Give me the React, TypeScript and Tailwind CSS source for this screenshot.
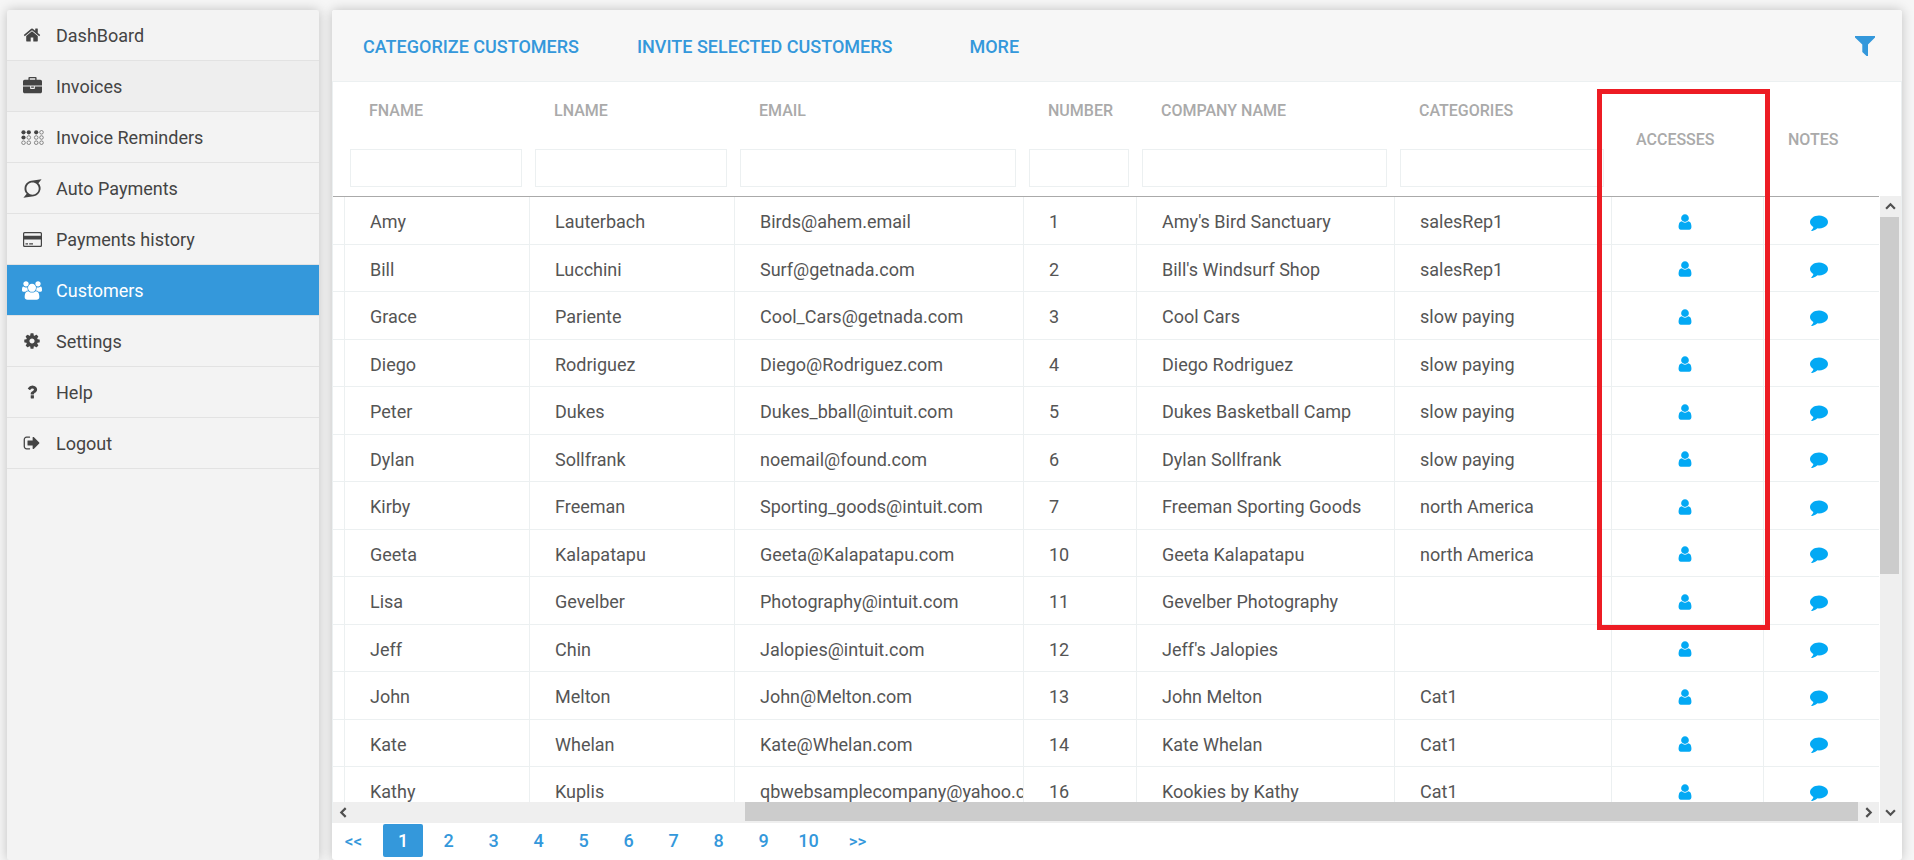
import React from "react";

const P = {
  home: "M1472 992v480q0 26-19 45t-45 19h-384v-384h-256v384h-384q-26 0-45-19t-19-45v-480q0-1 .5-3t.5-3l575-474 575 474q1 2 1 6zm223-69l-62 74q-8 9-21 11h-3q-13 0-21-7l-692-577-692 577q-12 8-24 7-13-2-21-11l-62-74q-8-10-7-23.5t11-21.5l719-599q32-26 76-26t76 26l244 204v-195q0-14 9-23t23-9h192q14 0 23 9t9 23v408l219 182q10 8 11 21.5t-7 23.5z",
  briefcase: "M640 256h512v-128h-512v128zm1152 640v480q0 66-47 113t-113 47h-1472q-66 0-113-47t-47-113v-480h672v160q0 26 19 45t45 19h320q26 0 45-19t19-45v-160h672zm-768 0v128h-256v-128h256zm768-480v384h-1792v-384q0-66 47-113t113-47h352v-160q0-40 28-68t68-28h576q40 0 68 28t28 68v160h352q66 0 113 47t47 113z",
  cog: "M1152 896q0-106-75-181t-181-75-181 75-75 181 75 181 181 75 181-75 75-181zm512-109v222q0 12-8 23t-20 13l-185 28q-19 54-39 91 35 50 107 138 10 12 10 25t-9 23q-27 37-99 108t-94 71q-12 0-26-9l-138-108q-44 23-91 38-16 136-29 186-7 28-36 28h-222q-14 0-24.5-8.5t-11.5-21.5l-28-184q-49-16-90-37l-141 107q-10 9-25 9-14 0-25-11-126-114-165-168-7-10-7-23 0-12 8-23 15-21 51-66.5t54-70.5q-27-50-41-99l-183-27q-13-2-21-12.5t-8-23.5v-222q0-12 8-23t19-13l186-28q14-46 39-92-40-57-107-138-10-12-10-24 0-10 9-23 26-36 98.5-107.5t94.5-71.5q13 0 26 10l138 107q44-23 91-38 16-136 29-186 7-28 36-28h222q14 0 24.5 8.5t11.5 21.5l28 184q49 16 90 37l142-107q9-9 24-9 13 0 25 10 129 119 165 170 7 8 7 22 0 12-8 23-15 21-51 66.5t-54 70.5q26 50 41 98l183 28q13 2 21 12.5t8 23.5z",
  help: "M1088 1256v240q0 16-12 28t-28 12h-240q-16 0-28-12t-12-28v-240q0-16 12-28t28-12h240q16 0 28 12t12 28zm316-600q0 54-15.5 101t-35 76.5-55 59.5-57.5 43.5-61 35.5q-41 23-68.5 65t-27.5 67q0 17-12 32.5t-28 15.5h-240q-15 0-25.5-18.5t-10.5-37.5v-45q0-83 65-156.5t143-108.5q59-27 84-56t25-76q0-42-46.5-74t-107.5-32q-65 0-108 29-35 25-107 115-13 16-31 16-12 0-25-8l-164-125q-13-10-15.5-25t5.5-28q160-266 464-266 80 0 161 31t146 83 106 127.5 41 158.5z",
  logout: "M704 1440q0 4 1 20t.5 26.5-3 23.5-10 19.5-20.5 6.5h-320q-119 0-203.5-84.5t-84.5-203.5v-704q0-119 84.5-203.5t203.5-84.5h320q13 0 22.5 9.5t9.5 22.5q0 4 1 20t.5 26.5-3 23.5-10 19.5-20.5 6.5h-320q-66 0-113 47t-47 113v704q0 66 47 113t113 47h312l11.5 1 11.5 3 8 5.5 7 9 2 13.5zm928-544q0 26-19 45l-544 544q-19 19-45 19t-45-19-19-45v-288h-448q-26 0-45-19t-19-45v-384q0-26 19-45t45-19h448v-288q0-26 19-45t45-19 45 19l544 544q19 19 19 45z",
  users: "M593 896q-162 5-265 128h-134q-82 0-138-40.5t-56-118.5q0-353 124-353 6 0 43.5 21t97.5 42.5 119 21.5q67 0 133-23-5 37-5 66 0 139 81 256zm1071 637q0 120-73 189.5t-194 69.5h-874q-121 0-194-69.5t-73-189.5q0-53 3.5-103.5t14-109 26.5-108.5 43-97.5 62-81 85.5-53.5 111.5-20q10 0 43 21.5t73 48 107 48 135 21.5 135-21.5 107-48 73-48 43-21.5q61 0 111.5 20t85.5 53.5 62 81 43 97.5 26.5 108.5 14 109 3.5 103.5zm-1024-1277q0 106-75 181t-181 75-181-75-75-181 75-181 181-75 181 75 75 181zm704 384q0 159-112.5 271.5t-271.5 112.5-271.5-112.5-112.5-271.5 112.5-271.5 271.5-112.5 271.5 112.5 112.5 271.5zm576 225q0 78-56 118.5t-138 40.5h-134q-103-123-265-128 81-117 81-256 0-29-5-66 66 23 133 23 59 0 119-21.5t97.5-42.5 43.5-21q124 0 124 353zm-128-609q0 106-75 181t-181 75-181-75-75-181 75-181 181-75 181 75 75 181z",
  user: "M1536 1399q0 109-62.5 187t-150.5 78h-854q-88 0-150.5-78t-62.5-187q0-85 8.5-160.5t31.5-152 58.5-131 94-89 134.5-34.5q131 128 313 128t313-128q76 0 134.5 34.5t94 89 58.5 131 31.5 152 8.5 160.5zm-256-887q0 159-112.5 271.5t-271.5 112.5-271.5-112.5-112.5-271.5 112.5-271.5 271.5-112.5 271.5 112.5 112.5 271.5z",
  comment: "M1792 896q0 174-120 321.5t-326 233-450 85.5q-70 0-145-8-198 175-460 242-49 14-114 22-17 2-30.5-9t-17.5-29v-1q-3-4-.5-12t2-10 4.5-9.5l6-9 7-8.5 8-9q7-8 31-34.5t34.5-38 31-39.5 32.5-51 27-59 26-76q-157-89-247.5-220t-90.5-281q0-130 71-248.5t191-204.5 286-136.5 348-50.5q244 0 450 85.5t326 233 120 321.5z",
};

function Icon({ d, className, box = "0 0 1792 1792" }: { d: string; className: string; box?: string }) {
  return (
    <svg viewBox={box} className={className} fill="currentColor" aria-hidden="true">
      <path d={d} />
    </svg>
  );
}

const DOTS = [2.5, 7.8, 15.2, 20.5].flatMap((x, col) =>
  [2.3, 7.5, 12.7].map((y, row) => ({ x, y, solid: (row === 0 && col < 3) || (row === 1 && col === 0) })),
);

function DotsIcon() {
  return (
    <svg viewBox="0 0 23 15" className="h-[15px] w-[23px]" aria-hidden="true">
      {DOTS.map((c) => (
        <circle
          key={`${c.x}-${c.y}`}
          cx={c.x}
          cy={c.y}
          r={c.solid ? 2.1 : 1.8}
          fill={c.solid ? "currentColor" : "none"}
          stroke="currentColor"
          strokeWidth={c.solid ? 0 : 0.6}
        />
      ))}
    </svg>
  );
}

function CycleIcon() {
  return (
    <svg viewBox="0 0 19 19" className="size-[19px]" fill="currentColor" aria-hidden="true">
      <path
        fillRule="evenodd"
        d="M18.600.200L15.400 4.300C17.200 6 17.900 8.200 17.500 10.600 16.800 14.300 14.200 16.700 10.800 17.300L.400 18.800 3.700 14.800C1.900 13 1.200 10.900 1.600 8.400 2.200 4.700 4.900 2.300 8.300 1.700zM9.500 3.500C6 3.500 3.400 6.200 3.400 9.600S6 15.700 9.500 15.700 15.700 13 15.700 9.600 13 3.500 9.500 3.500z"
      />
    </svg>
  );
}

function CardIcon() {
  return (
    <svg viewBox="0 0 19 15" className="h-[15px] w-[19px]" fill="currentColor" aria-hidden="true">
      <path
        fillRule="evenodd"
        d="M1.500 0h16Q19 0 19 1.500v12Q19 15 17.500 15h-16Q0 15 0 13.500v-12Q0 0 1.500 0zM1.200 1.700v2h16.600v-2q0-.4-.4-.4H1.600q-.4 0-.4.4zM1.200 7.500v5.800q0 .4.4.4h15.800q.4 0 .4-.4V7.500zM2.500 11.300H5v1.300H2.500zM6.200 11.300H10v1.300H6.200z"
      />
    </svg>
  );
}

const NAV = [
  { label: "DashBoard", icon: <Icon d={P.home} className="size-[18px]" />, tone: "text-[#444]" },
  { label: "Invoices", icon: <Icon d={P.briefcase} className="size-[19px]" />, tone: "bg-[#eee] text-[#444]" },
  { label: "Invoice Reminders", icon: <DotsIcon />, tone: "text-[#444]" },
  { label: "Auto Payments", icon: <CycleIcon />, tone: "text-[#444]" },
  { label: "Payments history", icon: <CardIcon />, tone: "text-[#444]" },
  { label: "Customers", icon: <Icon d={P.users} box="0 0 1920 1792" className="h-[19px] w-5" />, tone: "bg-[#3498db] text-white" },
  { label: "Settings", icon: <Icon d={P.cog} className="size-[18px]" />, tone: "text-[#444]" },
  { label: "Help", icon: <Icon d={P.help} className="size-[18px]" />, tone: "text-[#444]" },
  { label: "Logout", icon: <Icon d={P.logout} className="size-[18px]" />, tone: "text-[#444]" },
];

const COLUMNS = ["Fname", "Lname", "Email", "Number", "Company name", "Categories"];

const ROWS = [
  ["Amy", "Lauterbach", "Birds@ahem.email", "1", "Amy's Bird Sanctuary", "salesRep1"],
  ["Bill", "Lucchini", "Surf@getnada.com", "2", "Bill's Windsurf Shop", "salesRep1"],
  ["Grace", "Pariente", "Cool_Cars@getnada.com", "3", "Cool Cars", "slow paying"],
  ["Diego", "Rodriguez", "Diego@Rodriguez.com", "4", "Diego Rodriguez", "slow paying"],
  ["Peter", "Dukes", "Dukes_bball@intuit.com", "5", "Dukes Basketball Camp", "slow paying"],
  ["Dylan", "Sollfrank", "noemail@found.com", "6", "Dylan Sollfrank", "slow paying"],
  ["Kirby", "Freeman", "Sporting_goods@intuit.com", "7", "Freeman Sporting Goods", "north America"],
  ["Geeta", "Kalapatapu", "Geeta@Kalapatapu.com", "10", "Geeta Kalapatapu", "north America"],
  ["Lisa", "Gevelber", "Photography@intuit.com", "11", "Gevelber Photography", ""],
  ["Jeff", "Chin", "Jalopies@intuit.com", "12", "Jeff's Jalopies", ""],
  ["John", "Melton", "John@Melton.com", "13", "John Melton", "Cat1"],
  ["Kate", "Whelan", "Kate@Whelan.com", "14", "Kate Whelan", "Cat1"],
  ["Kathy", "Kuplis", "qbwebsamplecompany@yahoo.com", "16", "Kookies by Kathy", "Cat1"],
];

const PAGES = ["2", "3", "4", "5", "6", "7", "8", "9", "10"];

function Arrow({ d, label }: { d: string; label: string }) {
  return (
    <button aria-label={label} className="flex size-[21px] shrink-0 items-center justify-center text-[#505050]">
      <svg viewBox="0 0 10 10" className="size-[11px]" fill="none" stroke="currentColor" strokeWidth="2" aria-hidden="true">
        <path d={d} />
      </svg>
    </button>
  );
}

export default function App() {
  return (
    <div className="flex h-screen items-stretch gap-[13px] overflow-hidden bg-[#f6f6f6] pt-[10px] pr-3 pl-[7px] font-[Roboto,sans-serif]">
      <nav className="w-[312px] shrink-0 rounded-xs bg-[#f3f3f3] shadow-[0_0_12px_rgba(0,0,0,0.22)]">
        <ul>
          {NAV.map((n) => (
            <li key={n.label}>
              <a href="#" className={`flex h-[51px] items-center border-b border-[#e2e2e2] text-[18px] ${n.tone}`}>
                <span className="flex w-[49px] justify-center pl-px">{n.icon}</span>
                {n.label}
              </a>
            </li>
          ))}
        </ul>
      </nav>

      <main className="flex min-w-0 flex-1 flex-col rounded-[3px] bg-white shadow-[0_0_12px_rgba(0,0,0,0.22)]">
        <header className="flex h-[72px] shrink-0 items-center justify-between rounded-t-[3px] border-b border-[#ecf0f1] bg-[#f7f7f7] pr-[27px] pl-[31px] text-[18px] font-medium text-[#3498db]">
          <div className="flex pt-0.5">
            <button className="mr-[58px]">CATEGORIZE CUSTOMERS</button>
            <button className="mr-[77px]">INVITE SELECTED CUSTOMERS</button>
            <button>MORE</button>
          </div>
          <button aria-label="Filter">
            <svg viewBox="0 0 20 20" className="size-5" fill="currentColor" aria-hidden="true">
              <path d="M0 0h20v1.500L13 8.500V20h-1.500L7.300 16V8.500L0 1.500z" />
            </svg>
          </button>
        </header>

        <div className="flex min-h-0 flex-1 border-x border-[#ecf0f1]">
          <div className="relative flex min-w-0 flex-1 flex-col">
            <div className="min-h-0 flex-1 overflow-hidden">
              <table className="w-full table-fixed border-separate border-spacing-0">
                <colgroup>
                  <col className="w-[12px]" />
                  <col className="w-[185px]" />
                  <col className="w-[205px]" />
                  <col className="w-[289px]" />
                  <col className="w-[113px]" />
                  <col className="w-[258px]" />
                  <col className="w-[217px]" />
                  <col className="w-[152px]" />
                  <col />
                </colgroup>
                <thead>
                  <tr className="h-[115px] text-left text-[16px] text-[#aaa]">
                    <th className="border-b border-[#aaa]" />
                    {COLUMNS.map((c) => (
                      <th key={c} className="border-b border-[#aaa] p-0 align-top font-medium">
                        <label className="flex flex-col pt-[17px] pr-2 pl-[5px]">
                          <span className="mb-[26px] pl-[19px] leading-6 uppercase">{c}</span>
                          <input type="text" className="h-[38px] w-full border border-[#ecf0f1] bg-white px-2 text-[#444]" />
                        </label>
                      </th>
                    ))}
                    <th className="border-b border-[#aaa] p-0 pt-0.5 pl-6 font-medium">ACCESSES</th>
                    <th className="border-b border-[#aaa] p-0 pt-0.5 pl-6 font-medium">NOTES</th>
                  </tr>
                </thead>
                <tbody className="text-[18px] text-[#555]">
                  {ROWS.map((r) => (
                    <tr key={r[0]} className="h-[48px] even:h-[47px]">
                      <td className="border-r border-b border-[#ecf0f1] p-0" />
                      {r.map((v, i) => (
                        <td key={i} className="overflow-hidden border-r border-b border-[#ecf0f1] p-0 pt-0.5 pl-[25px] whitespace-nowrap">
                          {v}
                        </td>
                      ))}
                      <td className="border-r border-b border-[#ecf0f1] p-0 pt-0.5 text-[#03a9f4]">
                        <button aria-label={`Accesses of ${r[0]}`} className="mx-auto block pr-1.5">
                          <Icon d={P.user} className="size-[18px]" />
                        </button>
                      </td>
                      <td className="border-b border-[#ecf0f1] p-0 pt-0.5 text-[#03a9f4]">
                        <button aria-label={`Notes of ${r[0]}`} className="mx-auto block pr-1.5">
                          <Icon d={P.comment} className="size-[18px]" />
                        </button>
                      </td>
                    </tr>
                  ))}
                </tbody>
              </table>
            </div>
            <div className="flex h-[21px] shrink-0 bg-[#efefef]">
              <Arrow label="Scroll left" d="M7 1L3 5l4 4" />
              <div className="flex flex-1 justify-end">
                <div className="h-[19px] w-[74%] bg-[#ccc]" />
              </div>
              <Arrow label="Scroll right" d="M3 1l4 4-4 4" />
            </div>
            <div className="pointer-events-none absolute top-[7px] right-[109px] h-[541px] w-[173px] border-5 border-[#ed1c24]" />
          </div>
          <div className="mt-[114px] flex w-[22px] shrink-0 flex-col items-start border-l border-white bg-[#efefef]">
            <Arrow label="Scroll up" d="M1 7l4-4 4 4" />
            <div className="min-h-0 w-full flex-1">
              <div className="h-[61%] w-[19px] bg-[#ccc]" />
            </div>
            <Arrow label="Scroll down" d="M1 3l4 4 4-4" />
          </div>
        </div>

        <div className="flex h-[37px] shrink-0 items-start pt-px pl-[3px] text-[18px] font-medium text-[#3498db]">
          <button className="h-[33px] w-[37px] pt-0.5 text-[17px]">&lt;&lt;</button>
          <button className="mx-[11px] h-[33px] w-[40px] rounded-xs bg-[#3498db] text-white">1</button>
          {PAGES.map((p) => (
            <button key={p} className="h-[33px] w-[45px] pr-4">
              {p}
            </button>
          ))}
          <button className="h-[33px] w-[37px] pt-0.5 text-[17px]">&gt;&gt;</button>
        </div>
      </main>
    </div>
  );
}
